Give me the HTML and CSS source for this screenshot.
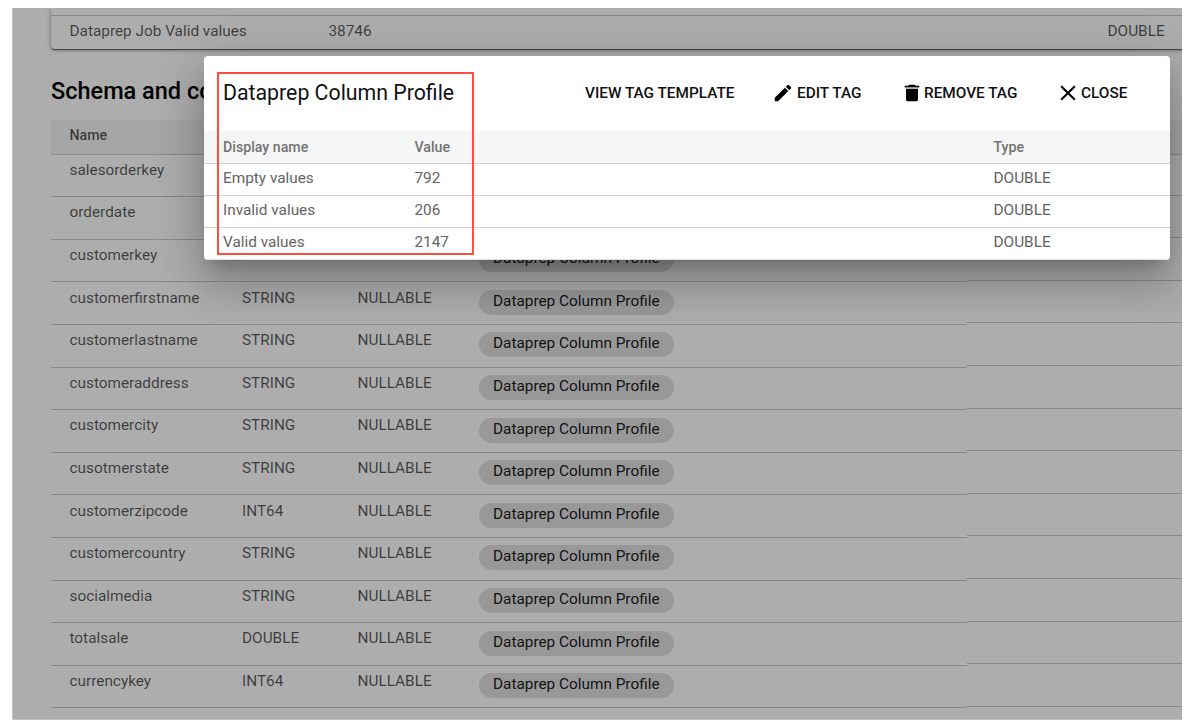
FILE: index.html
```html
<!DOCTYPE html>
<html lang="en">
<head>
<meta charset="utf-8">
<title>Schema and column tags</title>
<link rel="stylesheet" href="styles.css">
</head>
<body>
<div class="window">
  <div class="page">
    <div class="card">
      <div class="card-stub"></div>
      <div class="card-row"><span class="card-name">Dataprep Job Valid values</span><span class="card-value">38746</span><span>DOUBLE</span></div>
    </div>
    <h2 class="heading">Schema and co</h2>
    <div class="schema">
      <div class="schema-head">Name</div>
      <div id="rows"></div>
    </div>
  </div>
  <div class="overlay"></div>
  <div class="dialog">
    <div class="dialog-bar">
      <span class="dialog-title">Dataprep Column Profile</span>
      <span class="btn view">VIEW TAG TEMPLATE</span>
      <span class="btn edit"><svg width="24" height="24" viewBox="0 0 24 24"><path d="M3 17.25V21h3.75L17.81 9.94l-3.75-3.75L3 17.25zM20.71 7.04a1 1 0 0 0 0-1.41l-2.34-2.34a1 1 0 0 0-1.41 0l-1.83 1.83 3.75 3.75 1.83-1.83z"/></svg>EDIT TAG</span>
      <span class="btn remove"><svg width="24" height="24" viewBox="0 0 24 24"><path d="M5.500 7.500V19c0 1.100.9 2 2 2h9c1.100 0 2-.9 2-2V7.500zM20 4h-4l-1-1H9L8 4H4v2h16z"/><path class="lid-gap" d="M5.500 6h13v1.500h-13z"/></svg>REMOVE TAG</span>
      <span class="btn close"><svg width="24" height="24" viewBox="0 0 24 24"><path d="M19 6.410 17.590 5 12 10.590 6.410 5 5 6.410 10.590 12 5 17.590 6.410 19 12 13.410 17.590 19 19 17.590 13.410 12z"/></svg>CLOSE</span>
    </div>
    <div class="tag-row tag-head"><span>Display name</span><span>Value</span><span>Type</span></div>
    <div class="tag-row"><span>Empty values</span><span>792</span><span>DOUBLE</span></div>
    <div class="tag-row"><span>Invalid values</span><span>206</span><span>DOUBLE</span></div>
    <div class="tag-row"><span>Valid values</span><span>2147</span><span>DOUBLE</span></div>
    <div class="highlight"></div>
  </div>
</div>
<script src="rows.js"></script>
</body>
</html>
```
FILE: styles.css
```css
* { box-sizing: border-box; }
body { margin: 0; background: #fff; font-family: Roboto, "Liberation Sans", sans-serif; font-size: 15.350px; overflow: hidden; }
.window { position: relative; width: 1170px; height: 711.500px; margin: 8px 0 0 12px; overflow: hidden; background: #fff; }
.page { padding-left: 39px; color: rgba(0, 0, 0, .66); }
.card { width: 1200px; height: 40.500px; border-radius: 0 0 4px 4px; box-shadow: 0 2px 1px -1px rgba(0,0,0,.4), 0 1px 2px rgba(0,0,0,.35), 0 1px 5px rgba(0,0,0,.25); }
.card-stub { height: 8px; border-bottom: 1px solid #cbcbcb; }
.card-row { display: grid; grid-template-columns: 259px 779px 100px; height: 31px; line-height: 31px; padding-left: 18.500px; }
.heading { margin: 24.500px 0 0; height: 47px; line-height: 36px; font-size: 23.500px; font-weight: 500; color: #000; white-space: nowrap; }
.schema-head { height: 34.500px; padding-left: 18.500px; line-height: 30px; font-size: 14.200px; font-weight: 500; background: #f5f5f5; border-bottom: 1px solid #cbcbcb; }
.schema-row { display: flex; height: 42.620px; align-items: flex-start; }
.cells { display: grid; grid-template-columns: 172.500px 115.500px 121.500px 1fr; width: 916px; height: 42.620px; padding-left: 18.500px; line-height: 18px; border-bottom: 1px solid #cbcbcb; }
.cells > span { padding-top: 6.200px; }
.spacer { flex: 1; height: 41px; border-bottom: 1px solid #cbcbcb; }
.cells > .chip { justify-self: start; margin-top: 7.500px; height: 25px; padding: 0 14px; line-height: 22.500px; border-radius: 12.500px; background: #e0e0e0; color: rgba(0, 0, 0, .9); }
.overlay { position: absolute; inset: 0; background: rgba(0, 0, 0, .32); box-shadow: inset 1px -1px 0 rgba(255, 255, 255, .25); }
.dialog { position: absolute; left: 192px; top: 48px; width: 965.500px; height: 204px; background: #fff; border-radius: 4px; box-shadow: 0 12px 16px -7px rgba(0,0,0,.2), 0 26px 41px 3px rgba(0,0,0,.14), 0 10px 49px 9px rgba(0,0,0,.12); color: #646464; }
.dialog-bar { display: grid; grid-template-columns: 362px 187px 128.500px 154.500px 1fr; height: 74.500px; padding-left: 19px; line-height: 74px; color: #111; }
.dialog-title { font-size: 21.300px; }
.btn { display: flex; align-items: center; font-size: 15.350px; font-weight: 500; }
.btn svg { width: 22px; height: 22px; fill: #000; margin-right: 3px; flex: none; }
.btn .lid-gap { fill: #aaa; }
.remove svg { margin-right: 1.500px; }
.close svg { width: 26px; height: 26px; margin: 0; }
.tag-row { display: grid; grid-template-columns: 191.500px 579px 1fr; height: 32.100px; padding-left: 19px; line-height: 29px; border-bottom: 1px solid #d0d0d0; }
.tag-row:nth-last-child(2) { border-bottom-color: #e0e0e0; border-radius: 0 0 4px 4px; }
.tag-row.tag-head { height: 33px; line-height: 33px; font-size: 14.200px; font-weight: 500; background: #f5f5f5; color: #737373; }
.highlight { position: absolute; left: 13px; top: 15.500px; width: 257px; height: 183.500px; border: 2px solid #fb5040; }
```
FILE: rows.js
```js
const PROFILE = "Dataprep Column Profile";
const columns = [
  ["salesorderkey"],
  ["orderdate"],
  ["customerkey", "", "", PROFILE],
  ["customerfirstname", "STRING", "NULLABLE", PROFILE],
  ["customerlastname", "STRING", "NULLABLE", PROFILE],
  ["customeraddress", "STRING", "NULLABLE", PROFILE],
  ["customercity", "STRING", "NULLABLE", PROFILE],
  ["cusotmerstate", "STRING", "NULLABLE", PROFILE],
  ["customerzipcode", "INT64", "NULLABLE", PROFILE],
  ["customercountry", "STRING", "NULLABLE", PROFILE],
  ["socialmedia", "STRING", "NULLABLE", PROFILE],
  ["totalsale", "DOUBLE", "NULLABLE", PROFILE],
  ["currencykey", "INT64", "NULLABLE", PROFILE]
];
document.getElementById("rows").innerHTML = columns.map(([name, type = "", mode = "", tag]) =>
  `<div class="schema-row"><div class="cells"><span>${name}</span><span>${type}</span><span>${mode}</span>${tag ? `<span class="chip">${tag}</span>` : ""}</div><div class="spacer"></div></div>`
).join("");
```
